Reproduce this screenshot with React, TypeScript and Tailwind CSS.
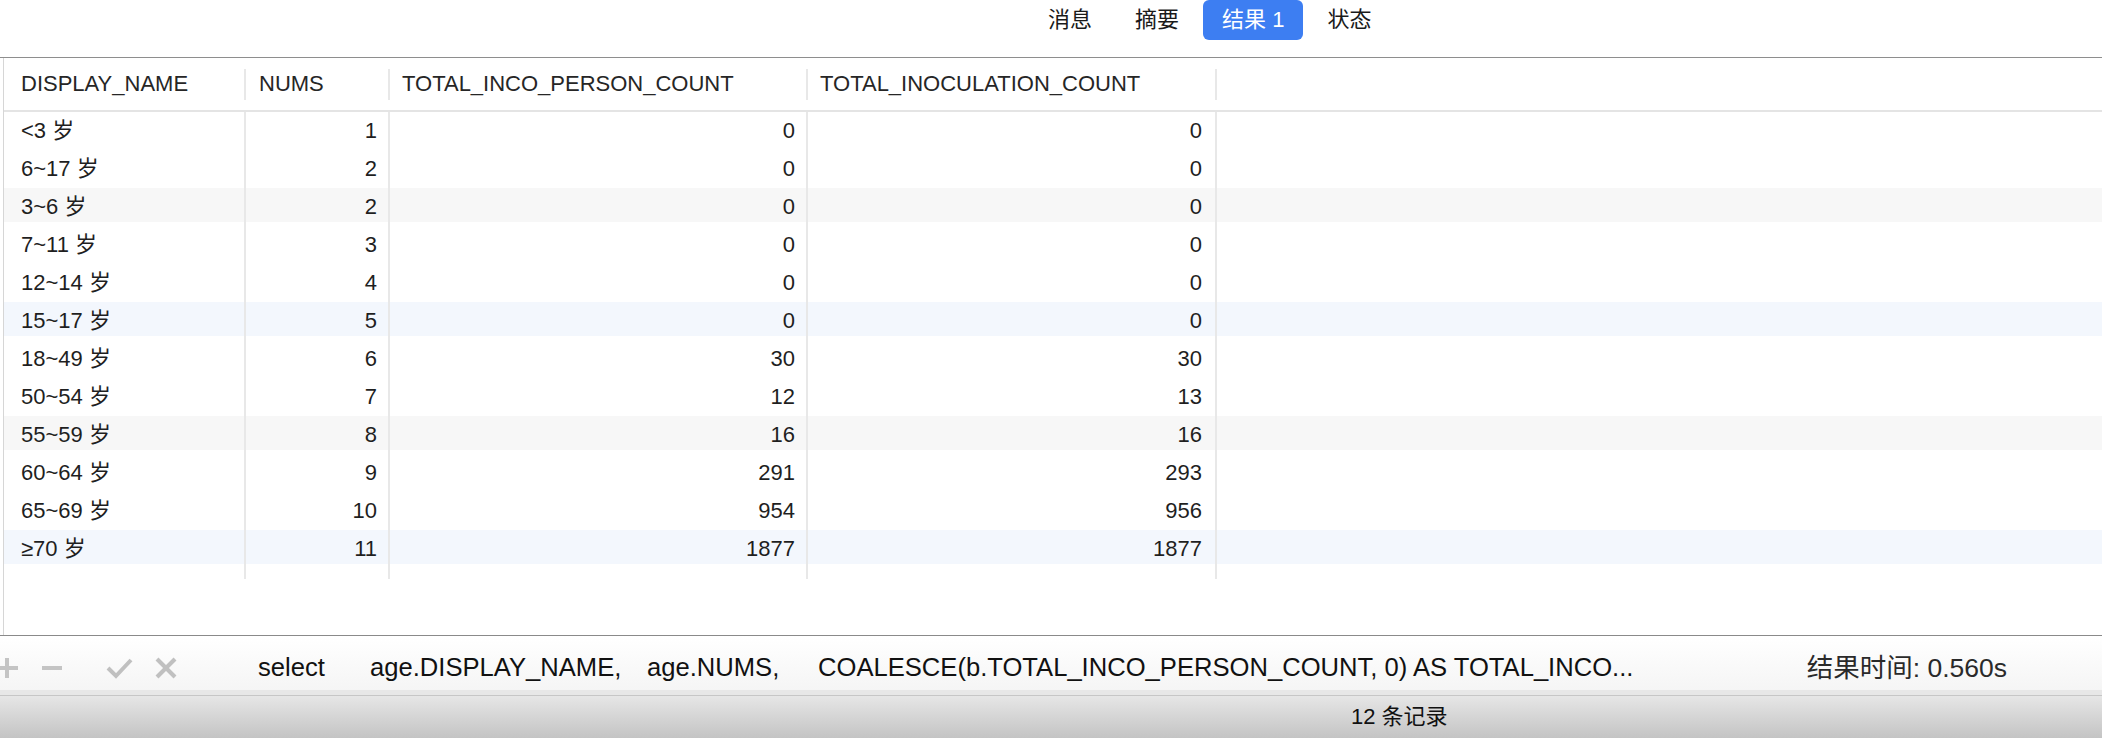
import React from "react";

const rows: [string, number, number, number][] = [
  ["<3 岁", 1, 0, 0],
  ["6~17 岁", 2, 0, 0],
  ["3~6 岁", 2, 0, 0],
  ["7~11 岁", 3, 0, 0],
  ["12~14 岁", 4, 0, 0],
  ["15~17 岁", 5, 0, 0],
  ["18~49 岁", 6, 30, 30],
  ["50~54 岁", 7, 12, 13],
  ["55~59 岁", 8, 16, 16],
  ["60~64 岁", 9, 291, 293],
  ["65~69 岁", 10, 954, 956],
  ["≥70 岁", 11, 1877, 1877],
];

const rowBg = (i: number) => {
  if (i % 3 !== 2) return "";
  return i % 6 === 2
    ? "bg-[linear-gradient(to_bottom,#f7f7f7_34px,transparent_34px)]"
    : "bg-[linear-gradient(to_bottom,#f3f7fd_34px,transparent_34px)]";
};

const font = "font-['Liberation_Sans','Noto_Sans_CJK_SC',sans-serif]";

function HeaderCell({ w, pl, label }: { w: string; pl: string; label: string }) {
  return (
    <div className={`${w} h-full flex items-center justify-between`}>
      <span className={`${pl} text-[22px] leading-none text-[#262626]`}>{label}</span>
      <div className="w-[2px] h-[31px] bg-[#e8e8e8]" />
    </div>
  );
}

export default function App() {
  return (
    <div className={`w-[2102px] h-[738px] flex flex-col bg-white overflow-hidden ${font}`}>
      {/* Tabs */}
      <div className="h-[57px] flex items-start pl-[1029px] gap-[5px] text-[22px] leading-none">
        <div className="h-[40px] px-[19px] flex items-center text-[#1a1a1a]">消息</div>
        <div className="h-[40px] px-[19px] flex items-center text-[#1a1a1a]">摘要</div>
        <div className="h-[40px] px-[19px] flex items-center text-white bg-[#3d7ef2] rounded-[6px]">结果 1</div>
        <div className="h-[40px] px-[19px] flex items-center text-[#1a1a1a]">状态</div>
      </div>
      <div className="h-px bg-[#8e8e8e]" />

      {/* Table */}
      <div className="flex-1 flex">
        <div className="w-[3px]" />
        <div className="w-px bg-[#d6d6d6]" />
        <div className="flex-1 flex flex-col">
          <div className="h-[52px] flex">
            <HeaderCell w="w-[242px]" pl="pl-[17px]" label="DISPLAY_NAME" />
            <HeaderCell w="w-[144px]" pl="pl-[13px]" label="NUMS" />
            <HeaderCell w="w-[418px]" pl="pl-[12px]" label="TOTAL_INCO_PERSON_COUNT" />
            <HeaderCell w="w-[409px]" pl="pl-[12px]" label="TOTAL_INOCULATION_COUNT" />
            <div className="flex-1" />
          </div>
          <div className="h-[2px] bg-[#e4e4e4]" />
          {rows.map((r, i) => (
            <div key={i} className={`h-[38px] flex text-[22px] leading-none text-[#1f1f1f] ${rowBg(i)}`}>
              <div className="w-[242px] shrink-0 border-r-2 border-[#e8e8e8] pl-[17px] flex justify-start">
                <span className="h-[34px] flex items-center pt-[4px]">{r[0]}</span>
              </div>
              <div className="w-[144px] shrink-0 border-r-2 border-[#e8e8e8] pr-[11px] flex justify-end">
                <span className="h-[34px] flex items-center pt-[4px]">{r[1]}</span>
              </div>
              <div className="w-[418px] shrink-0 border-r-2 border-[#e8e8e8] pr-[11px] flex justify-end">
                <span className="h-[34px] flex items-center pt-[4px]">{r[2]}</span>
              </div>
              <div className="w-[409px] shrink-0 border-r-2 border-[#e8e8e8] pr-[13px] flex justify-end">
                <span className="h-[34px] flex items-center pt-[4px]">{r[3]}</span>
              </div>
              <div className="flex-1" />
            </div>
          ))}
          <div className="h-[11px] flex">
            <div className="w-[242px] shrink-0 border-r-2 border-[#e8e8e8]" />
            <div className="w-[144px] shrink-0 border-r-2 border-[#e8e8e8]" />
            <div className="w-[418px] shrink-0 border-r-2 border-[#e8e8e8]" />
            <div className="w-[409px] shrink-0 border-r-2 border-[#e8e8e8]" />
          </div>
          <div className="flex-1" />
        </div>
      </div>

      {/* Toolbar */}
      <div className="h-px bg-[#8a8a8a]" />
      <div className="h-[54px] flex items-center pt-[10px] bg-[linear-gradient(to_bottom,#ffffff,#f5f5f5)] text-[25.6px] leading-none text-[#111111]">
        <svg width="258" height="30" viewBox="0 0 258 30" className="shrink-0">
          <g stroke="#c4c4c4" strokeWidth="4" fill="none">
            <line x1="-4" y1="15" x2="18" y2="15" />
            <line x1="7" y1="5" x2="7" y2="25" />
            <line x1="42" y1="15" x2="62" y2="15" />
          </g>
          <g stroke="#c0c0c0" strokeWidth="4" fill="none" strokeLinecap="butt" strokeLinejoin="miter">
            <polyline points="108,15 116,23 131,7" />
            <line x1="157" y1="6" x2="175" y2="24" />
            <line x1="175" y1="6" x2="157" y2="24" />
          </g>
        </svg>
        <span className="w-[112px] shrink-0">select</span>
        <span className="w-[277px] shrink-0">age.DISPLAY_NAME,</span>
        <span className="w-[171px] shrink-0">age.NUMS,</span>
        <span className="shrink-0 whitespace-pre">COALESCE(b.TOTAL_INCO_PERSON_COUNT, 0) AS TOTAL_INCO...</span>
        <span className="ml-auto pr-[95px] text-[26.5px] text-[#2a2a2a]">结果时间: 0.560s</span>
      </div>
      <div className="h-[5px] bg-[#e7e7e7]" />
      <div className="h-px bg-[#c6c6c6]" />
      <div className="h-[42px] flex items-center pl-[1351px] bg-[linear-gradient(to_bottom,#e6e6e6,#c4c4c4)] text-[22px] leading-none text-[#111111]">
        12 条记录
      </div>
    </div>
  );
}
